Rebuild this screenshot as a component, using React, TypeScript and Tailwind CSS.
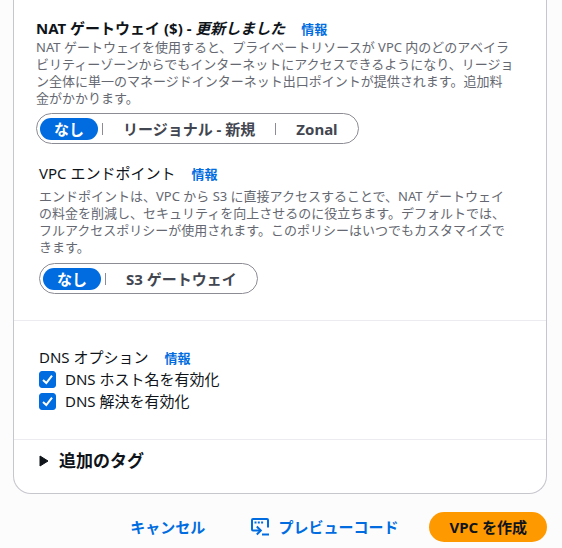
import { Fragment, useState } from "react";
import type { ReactNode } from "react";

interface SegmentedControlProps {
  label: string;
  options: string[];
}

function SegmentedControl({ label, options }: SegmentedControlProps) {
  const [selected, setSelected] = useState(options[0]);

  return (
    <div
      role="group"
      aria-label={label}
      className="flex h-[31px] w-fit items-center rounded-full border border-[#8c8c94] pl-[3px] text-[15px] leading-5 font-bold"
    >
      {options.map((option, index) => (
        <Fragment key={option}>
          {index > 0 && <span className="h-3 w-px bg-[#8c8c94]" />}
          <button
            type="button"
            aria-pressed={option === selected}
            onClick={() => setSelected(option)}
            className={
              option === selected
                ? "mr-1 h-[22px] rounded-full bg-[#006ce0] px-[14px] whitespace-nowrap text-white"
                : "px-5 whitespace-nowrap text-[#424650]"
            }
          >
            {option}
          </button>
        </Fragment>
      ))}
    </div>
  );
}

function InfoLink() {
  return (
    <a href="#info" className="ml-4 text-[13px] leading-none font-bold text-[#006ce0]">
      情報
    </a>
  );
}

interface CheckboxProps {
  id: string;
  children: ReactNode;
}

function Checkbox({ id, children }: CheckboxProps) {
  return (
    <div className="flex h-[22px] items-center gap-[9px]">
      <span className="grid size-[17px]">
        <input
          id={id}
          type="checkbox"
          defaultChecked
          className="peer col-start-1 row-start-1 size-[17px] appearance-none rounded-[3px] border border-[#8c8c94] bg-white checked:border-[#006ce0] checked:bg-[#006ce0]"
        />
        <svg
          viewBox="0 0 17 17"
          aria-hidden="true"
          className="pointer-events-none invisible col-start-1 row-start-1 size-[17px] peer-checked:visible"
        >
          <path d="M4 9 L7.3 12 L13 4.6" fill="none" stroke="#fff" strokeWidth="2" />
        </svg>
      </span>
      <label htmlFor={id} className="text-[15px] leading-5">
        {children}
      </label>
    </div>
  );
}

function PreviewIcon() {
  return (
    <svg viewBox="0 0 18 18" aria-hidden="true" className="size-[18px]" fill="none" stroke="currentColor">
      <path d="M17 9.5 V2 Q17 1 16 1 H2 Q1 1 1 2 V11.5 Q1 12.5 2 12.5 H9.5" strokeWidth="2" />
      <path d="M5.8 8.5 L9.8 12.5 L5.8 16.5" strokeWidth="2" />
      <path d="M11 16.5 H18" strokeWidth="2" />
      <path d="M3.5 4.5 H5.5 M6.8 4.5 H8.8 M10.1 4.5 H12.1" strokeWidth="2" />
    </svg>
  );
}

export default function App() {
  return (
    <div className="bg-[#fcfcfd] pb-[7px] font-['Noto_Sans','Noto_Sans_CJK_JP',sans-serif] text-[#0f141a]" lang="ja">
      <main className="mr-[15px] ml-[13px] rounded-b-[18px] border border-t-0 border-[#c6c6cd] bg-white">
        <section className="pt-[18px] pr-[26px] pl-[22px]">
          <h3 className="text-[15px] leading-5 font-bold">
            NAT ゲートウェイ ($) - <em>更新しました</em>
            <InfoLink />
          </h3>
          <p className="mt-px mb-[6px] text-[13px] leading-[17px] text-[#656871]">
            NAT ゲートウェイを使用すると、プライベートリソースが VPC
            内のどのアベイラビリティーゾーンからでもインターネットにアクセスできるようになり、リージョン全体に単一のマネージドインターネット出口ポイントが提供されます。追加料
            <br />
            金がかかります。
          </p>
          <SegmentedControl label="NAT ゲートウェイ" options={["なし", "リージョナル - 新規", "Zonal"]} />
        </section>

        <section className="border-b border-[#ebebf0] pt-[19px] pr-[31px] pb-[26px] pl-[25px]">
          <h3 className="text-[15px] leading-5">
            VPC エンドポイント
            <InfoLink />
          </h3>
          <p className="mt-[5px] mb-[7px] text-[13px] leading-[17px] text-[#656871]">
            エンドポイントは、VPC から S3 に直接アクセスすることで、NAT
            ゲートウェイの料金を削減し、セキュリティを向上させるのに役立ちます。デフォルトでは、フルアクセスポリシーが使用されます。このポリシーはいつでもカスタマイズできます。
          </p>
          <SegmentedControl label="VPC エンドポイント" options={["なし", "S3 ゲートウェイ"]} />
        </section>

        <section className="border-b border-[#ebebf0] pt-[26px] pr-[22px] pb-[27px] pl-[25px]">
          <h3 className="mb-px text-[15px] leading-5">
            DNS オプション
            <InfoLink />
          </h3>
          <Checkbox id="dns-hostnames">DNS ホスト名を有効化</Checkbox>
          <Checkbox id="dns-resolution">DNS 解決を有効化</Checkbox>
        </section>

        <section className="pt-[9px] pb-5 pl-[25px]">
          <button type="button" aria-expanded="false" className="flex items-center gap-[10px] text-[17px] leading-6 font-bold">
            <svg viewBox="0 0 10 12" aria-hidden="true" className="h-3 w-[10px]">
              <path d="M1 1 L9 6 L1 11 Z" fill="currentColor" stroke="currentColor" strokeLinejoin="round" />
            </svg>
            追加のタグ
          </button>
        </section>
      </main>

      <footer className="mt-[18px] mr-[15px] flex items-center justify-end gap-4 text-[15px] leading-5 font-bold whitespace-nowrap">
        <button type="button" className="h-[30px] px-[15px] text-[#006ce0]">
          キャンセル
        </button>
        <button type="button" className="flex h-[30px] items-center gap-[9px] px-[15px] text-[#006ce0]">
          <PreviewIcon />
          プレビューコード
        </button>
        <button type="button" className="h-[30px] rounded-full bg-[#ff9900] px-5">
          VPC を作成
        </button>
      </footer>
    </div>
  );
}
